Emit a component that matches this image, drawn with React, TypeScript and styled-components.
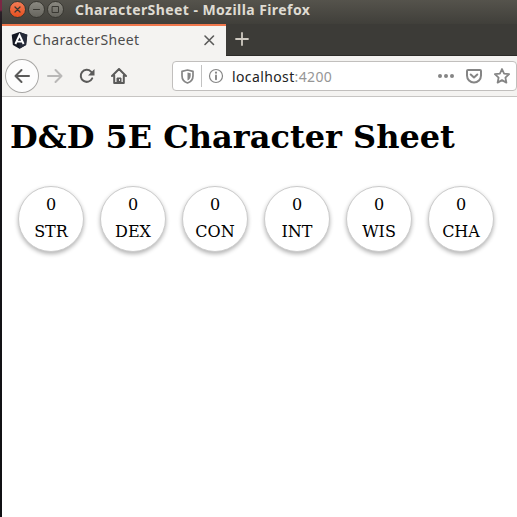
import React from 'react';
import styled, { createGlobalStyle } from 'styled-components';

const GlobalStyle = createGlobalStyle`
  * { box-sizing: border-box; }
  html, body { margin: 0; padding: 0; overflow: hidden; background: #fff; }
  svg { display: block; flex: none; }
`;

const Desktop = styled.div`
  width: 517px;
  height: 517px;
  padding-left: 2px;
  overflow: hidden;
  background: linear-gradient(#7b2744 0, #7b2744 10px, #2b2128 12px, #17161a 34px, #101013 100%);
`;

const BrowserWindow = styled.div`
  display: flex;
  flex-direction: column;
  height: 100%;
  background: #fff;
`;

const TitleBar = styled.header`
  display: flex;
  align-items: flex-start;
  height: 24px;
  flex: none;
  padding-left: 7px;
  background: linear-gradient(#55534c, #403f3a);
`;

const WindowControls = styled.div`
  display: flex;
  gap: 2px;
  padding-top: 1px;
`;

const ControlButton = styled.button<{ $close?: boolean }>`
  display: grid;
  place-items: center;
  width: 17px;
  height: 17px;
  padding: 0;
  border: 1px solid #383731;
  border-radius: 50%;
  color: #393832;
  background: ${p => (p.$close ? 'linear-gradient(#f37c56, #e5501f)' : 'linear-gradient(#8b8981, #66655e)')};
`;

const WindowTitle = styled.div`
  margin-left: 11px;
  color: #dfdbd2;
  font: bold 14px/20px "Noto Sans", sans-serif;
  letter-spacing: 0.43px;
  white-space: nowrap;
`;

const TabStrip = styled.div`
  display: flex;
  height: 32px;
  flex: none;
  background: #3c3b37;
  border-bottom: 1px solid #2c2b28;
`;

const Tab = styled.div`
  display: flex;
  align-items: center;
  width: 224px;
  height: 32px;
  padding: 0 9px 2px 9px;
  border-top: 2px solid #f0774c;
  background: #f4f3f1;
  color: #5b5b5a;
`;

const TabLabel = styled.span`
  flex: 1;
  margin-left: 5px;
  color: #4c4c4c;
  font: 14px/20px "Noto Sans", sans-serif;
  letter-spacing: 0.36px;
`;

const NewTab = styled.div`
  display: grid;
  place-items: center;
  width: 34px;
  height: 29px;
  margin-left: -1px;
  color: #cfcac1;
`;

const Toolbar = styled.nav`
  display: flex;
  align-items: center;
  height: 41px;
  flex: none;
  padding-left: 3px;
  background: #f4f3f1;
  border-bottom: 1px solid #c7c5c3;
  color: #5b5b5a;
`;

const BackButton = styled.div`
  display: grid;
  place-items: center;
  width: 34px;
  height: 34px;
  border: 1px solid #a9a8a6;
  border-radius: 50%;
  background: #fdfdfd;
`;

const ToolButton = styled.div<{ $disabled?: boolean }>`
  display: grid;
  place-items: center;
  width: ${p => (p.$disabled ? '33px' : '32px')};
  height: 32px;
  color: ${p => (p.$disabled ? '#b9b8b7' : 'inherit')};
`;

const AddressBar = styled.div`
  display: flex;
  align-items: center;
  width: 345px;
  height: 30px;
  margin-left: 37px;
  padding: 0 6px 0 7px;
  border: 1px solid #c1bfbd;
  border-radius: 4px;
  background: #fff;
  color: #858585;
  flex: none;
`;

const Divider = styled.span`
  width: 1px;
  height: 22px;
  margin: 0 6px;
  background: #c2c2c2;
`;

const Address = styled.span`
  flex: 1;
  margin-left: 8px;
  padding-top: 1px;
  color: #969696;
  font: 14px/20px "Noto Sans", sans-serif;
  letter-spacing: 0.38px;
`;

const Host = styled.span`
  color: #222;
`;

const AddressActions = styled.div`
  display: flex;
  align-items: center;
  gap: 12px;
`;

const Page = styled.main`
  flex: 1;
  padding: 22px 8px 0;
  color: #000;
  font: 16px/19px "DejaVu Serif", serif;
`;

const Heading = styled.h1`
  margin: 0;
  font-size: 32px;
  line-height: 37px;
  white-space: nowrap;
`;

const AbilityRow = styled.section`
  display: flex;
  gap: 16px;
  margin: 30px 0 0 8px;
`;

const AbilityCircle = styled.div`
  display: flex;
  flex-direction: column;
  align-items: center;
  gap: 8px;
  width: 66px;
  height: 66px;
  padding-top: 8px;
  border: 1px solid #ccc;
  border-radius: 50%;
  background: #fff;
  box-shadow: 0 2px 4px rgba(0, 0, 0, 0.3);
`;

const Icon = ({ size = 16, width = 2, children }: { size?: number; width?: number; children: React.ReactNode }) => (
  <svg width={size} height={size} viewBox={`0 0 ${size} ${size}`} fill="none" stroke="currentColor" strokeWidth={width} strokeLinecap="round" strokeLinejoin="round">
    {children}
  </svg>
);

const abilities = ['STR', 'DEX', 'CON', 'INT', 'WIS', 'CHA'];

export default function App() {
  return (
    <>
      <GlobalStyle />
      <Desktop>
        <BrowserWindow>
          <TitleBar>
            <WindowControls>
              <ControlButton $close aria-label="Close">
                <Icon size={9} width={1.3}><path d="M2 2l5 5M7 2L2 7" /></Icon>
              </ControlButton>
              <ControlButton aria-label="Minimize">
                <Icon size={9} width={1}><path d="M1.5 4.5h6" /></Icon>
              </ControlButton>
              <ControlButton aria-label="Maximize">
                <Icon size={9} width={1}><path d="M1.5 1.5h6v6h-6z" /></Icon>
              </ControlButton>
            </WindowControls>
            <WindowTitle>CharacterSheet - Mozilla Firefox</WindowTitle>
          </TitleBar>
          <TabStrip>
            <Tab>
              <svg width="17" height="17" viewBox="0 0 17 17">
                <path d="M8.5 0L16.3 2.8l-1.2 10.3-6.6 3.7-6.6-3.7L.7 2.8z" fill="#131722" />
                <path d="M8.5 0l7.8 2.8-1.2 10.3-6.6 3.7z" fill="#252a38" />
                <path d="M4.4 12L8.5 3l4.1 9M6 9.6h5" fill="none" stroke="#fff" strokeWidth="1.9" />
              </svg>
              <TabLabel>CharacterSheet</TabLabel>
              <Icon width={1.6}><path d="M4 4l8.5 8.5M12.5 4L4 12.5" /></Icon>
            </Tab>
            <NewTab><Icon width={1.8}><path d="M8 2v12M2 8h12" /></Icon></NewTab>
          </TabStrip>
          <Toolbar>
            <BackButton><Icon><path d="M15 8H1.5M7.5 2l-6 6 6 6" /></Icon></BackButton>
            <ToolButton $disabled><Icon><path d="M1 8h13.5M8.5 2l6 6-6 6" /></Icon></ToolButton>
            <ToolButton>
              <Icon><path d="M13.2 10.4A6 6 0 1 1 12 3.6L13.8 5.6" /><path d="M15.5 1v6.5H9z" fill="currentColor" stroke="none" /></Icon>
            </ToolButton>
            <ToolButton>
              <Icon><path d="M1 8l7-7 7 7M3.2 7.5V15h9.6V7.5" /><path d="M6 14v-4h4v4z" fill="currentColor" strokeWidth="1" /><path d="M8.5 11.5v1" stroke="#f4f3f1" strokeWidth="1" /></Icon>
            </ToolButton>
            <AddressBar>
              <Icon size={15} width={1.7}>
                <path d="M7.5 1L13 2.3v4.4c0 3.5-2.3 6.2-5.5 7.3C4.3 12.9 2 10.2 2 6.7V2.3z" />
                <path d="M7.5 3.5v8c2.2-1 3.2-2.8 3.2-4.8V4.3z" fill="currentColor" stroke="none" />
              </Icon>
              <Divider />
              <Icon width={1.2}>
                <circle cx="8" cy="8" r="6.5" />
                <path d="M8 7.5v3.7" strokeWidth="1.9" />
                <circle cx="8" cy="4.7" r="1.1" fill="currentColor" stroke="none" />
              </Icon>
              <Address><Host>localhost</Host>:4200</Address>
              <AddressActions>
                <Icon><g fill="currentColor" stroke="none"><circle cx="2" cy="8" r="2" /><circle cx="8" cy="8" r="2" /><circle cx="14" cy="8" r="2" /></g></Icon>
                <Icon><path d="M2 2h12q1 0 1 1v4.5a7 7 0 0 1-14 0V3q0-1 1-1z" /><path d="M4.7 6.5L8 9.5l3.3-3" /></Icon>
                <Icon width={1.8}><path d="M8 1l2.1 4.6 5 .6-3.7 3.4 1 5L8 12.1l-4.4 2.5 1-5L.9 6.2l5-.6z" /></Icon>
              </AddressActions>
            </AddressBar>
          </Toolbar>
          <Page>
            <Heading>D&amp;D 5E Character Sheet</Heading>
            <AbilityRow>
              {abilities.map(name => (
                <AbilityCircle key={name}>
                  <span>0</span>
                  <span>{name}</span>
                </AbilityCircle>
              ))}
            </AbilityRow>
          </Page>
        </BrowserWindow>
      </Desktop>
    </>
  );
}
